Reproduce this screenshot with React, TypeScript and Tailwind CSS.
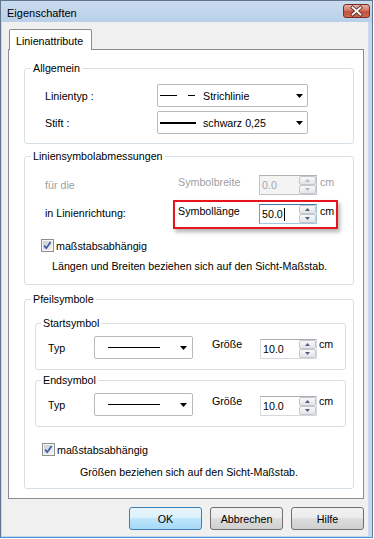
import React from "react";

const btnBase =
  "w-[73px] h-[23px] rounded-[3px] border flex items-center justify-center text-black";

const DropArrow = () => (
  <svg width="7" height="4" viewBox="0 0 7 4">
    <path d="M0 0h7L3.5 4z" fill="#000" />
  </svg>
);

const SpinHalf = ({ up, disabled }: { up?: boolean; disabled?: boolean }) => (
  <div className="flex-1 flex items-center justify-center border border-[#c3c8ce] rounded-[2px] bg-[linear-gradient(to_bottom,#f8f8f8,#e3e5e8)]">
    <svg width="5" height="3" viewBox="0 0 5 3">
      <path
        d={up ? "M0 3h5L2.5 0z" : "M0 0h5L2.5 3z"}
        fill={disabled ? "#b6b9bd" : "#4d5f85"}
      />
    </svg>
  </div>
);

interface SpinEditProps {
  value: string;
  width: string;
  disabled?: boolean;
  focused?: boolean;
}

const SpinEdit = ({ value, width, disabled, focused }: SpinEditProps) => {
  const frame = disabled
    ? "border-[#c2c4c7] border-t-[#adb2b5] bg-[#f4f4f4] text-[#a0a6b0]"
    : focused
      ? "border-[#a4c9e3] border-t-[#3d7bad] border-l-[#6d9cc4] bg-white text-black"
      : "border-[#d5d9de] border-t-[#abadb3] bg-white text-black";
  return (
    <div className={`flex h-[20px] border ${width} ${frame}`}>
      <div className="flex-1 flex items-center pl-[2px]">
        {value}
        {focused && <span className="w-px h-[13px] bg-black ml-px" />}
      </div>
      <div className="flex flex-col w-[17px]">
        <SpinHalf up disabled={disabled} />
        <SpinHalf disabled={disabled} />
      </div>
    </div>
  );
};

const CheckBox = () => (
  <svg width="13" height="13" viewBox="0 0 13 13" className="shrink-0">
    <defs>
      <linearGradient id="cbfill" x1="0" y1="0" x2="1" y2="1">
        <stop offset="0" stopColor="#c9cfd8" />
        <stop offset="1" stopColor="#f2f3f5" />
      </linearGradient>
    </defs>
    <rect x="0.5" y="0.5" width="12" height="12" fill="#f6f6f6" stroke="#8e8f8f" />
    <rect x="2" y="2" width="9" height="9" fill="url(#cbfill)" />
    <path
      d="M3.2 6.6l2.1 2.6 4.3-6.2"
      stroke="#3f58a3"
      strokeWidth="1.7"
      fill="none"
    />
  </svg>
);

// group box: the legend sits on the border, padding goes on the inner div
const Group = ({
  title,
  className,
  inner,
  legendClass = "ml-[6px]",
  children,
}: {
  title: string;
  className: string;
  inner: string;
  legendClass?: string;
  children: React.ReactNode;
}) => (
  <fieldset className={`border border-[#d5dfe5] rounded-[3px] ${className}`}>
    <legend className={`px-[2px] leading-[14px] ${legendClass}`}>{title}</legend>
    <div className={inner}>{children}</div>
  </fieldset>
);

const ArrowRow = () => (
  <div className="flex items-start h-[23px]">
    <div className="w-[46px] self-center">Typ</div>
    <div className="w-[99px] h-[23px] border border-[#b9b9b9] rounded-[2px] bg-white flex items-center">
      <span className="ml-[13px] w-[52px] h-px bg-black" />
      <span className="ml-auto mr-[5px] flex">
        <DropArrow />
      </span>
    </div>
    <div className="ml-[19px] w-[48px] mt-px">Größe</div>
    <div className="mt-[3px]">
      <SpinEdit value="10.0" width="w-[57px]" />
    </div>
    <div className="ml-[2px] mt-px">cm</div>
  </div>
);

export default function App() {
  return (
    <div className="w-[374px] h-[539px] bg-white font-['Liberation_Sans',Arial,sans-serif] text-[10.7px] leading-[14px] text-black">
      <div className="w-[373px] h-[538px] border border-[#62778f] border-b-[#4a90d9] flex flex-col bg-[#c4d8ee]">
        {/* title bar */}
        <div className="h-[21px] flex items-start bg-[linear-gradient(to_bottom,#cadcef,#b9d0e9)]">
          <div className="ml-[6px] mt-[5px] text-[11px]">Eigenschaften</div>
          <svg width="27" height="14" viewBox="0 0 27 14" className="ml-auto mr-[2px] mt-[3px]">
            <defs>
              <linearGradient id="closebg" x1="0" y1="0" x2="0" y2="1">
                <stop offset="0" stopColor="#e9b2a6" />
                <stop offset="0.45" stopColor="#d47a68" />
                <stop offset="0.5" stopColor="#c2513d" />
                <stop offset="1" stopColor="#cd6a4f" />
              </linearGradient>
            </defs>
            <rect x="0.5" y="0.5" width="26" height="13" rx="2.5" fill="url(#closebg)" stroke="#7b2e25" />
            <path d="M9.5 3.5l8 7M17.5 3.5l-8 7" stroke="#5a2a24" strokeWidth="3.4" strokeLinecap="square" />
            <path d="M9.5 3.5l8 7M17.5 3.5l-8 7" stroke="#ffffff" strokeWidth="1.8" strokeLinecap="square" />
          </svg>
        </div>

        {/* client */}
        <div className="flex-1 flex ml-px mr-[4px] mb-px">
          <div className="flex-1 bg-[#f0f0f0] flex flex-col">
            <div className="pt-[7px] pl-[7px] flex">
              <div className="relative z-10 -mb-px h-[21px] w-[83px] bg-white border border-b-0 border-[#898c95] rounded-t-[2px] pl-[6px] pt-[4px]">
                Linienattribute
              </div>
            </div>

            <div className="ml-[6px] w-[356px] h-[450px] border border-[#898c95] bg-white pt-[11px] pl-[15px] pr-[9px]">
              {/* Allgemein */}
              <Group title="Allgemein" className="" inner="pt-[9px] pb-[9px] pl-[20px]">
                <div className="flex flex-col gap-[4px]">
                  <div className="flex items-center h-[23px]">
                    <div className="w-[112px]">Linientyp :</div>
                    <div className="w-[151px] h-[23px] border border-[#b9b9b9] rounded-[2px] bg-white flex items-center">
                      <span className="ml-[2px] w-[17px] h-px bg-black" />
                      <span className="ml-[11px] w-[7px] h-px bg-black" />
                      <span className="ml-[8px]">Strichlinie</span>
                      <span className="ml-auto mr-[4px] flex">
                        <DropArrow />
                      </span>
                    </div>
                  </div>
                  <div className="flex items-center h-[23px]">
                    <div className="w-[112px]">Stift :</div>
                    <div className="w-[151px] h-[23px] border border-[#b9b9b9] rounded-[2px] bg-white flex items-center">
                      <span className="ml-[2px] w-[36px] h-[2px] bg-black" />
                      <span className="ml-[7px]">schwarz 0,25</span>
                      <span className="ml-auto mr-[4px] flex">
                        <DropArrow />
                      </span>
                    </div>
                  </div>
                </div>
              </Group>

              {/* Liniensymbolabmessungen */}
              <Group title="Liniensymbolabmessungen" className="mt-[5px]" inner="pt-[12px] pb-[11px]">
                <div className="flex items-start h-[20px] pl-[20px]">
                  <div className="w-[128px] mt-[3px] text-[#a0a0a0]">für die</div>
                  <div className="pl-[5px] w-[81px] text-[#a0a0a0] box-content">Symbolbreite</div>
                  <SpinEdit value="0.0" width="w-[58px]" disabled />
                  <div className="ml-[3px] text-[#a0a0a0]">cm</div>
                </div>
                <div className="flex items-start mt-[5px] pl-[20px]">
                  <div className="w-[128px] mt-[6px]">in Linienrichtung:</div>
                  <div className="w-[165px] h-[29px] border-2 border-[#e8141c] shadow-[2px_3px_4px_rgba(0,0,0,0.3)] flex items-start pl-[3px] pt-[2px]">
                    <div className="w-[81px]">Symbollänge</div>
                    <SpinEdit value="50.0" width="w-[58px]" focused />
                    <div className="ml-[3px]">cm</div>
                  </div>
                </div>
                <div className="flex items-center h-[13px] mt-[10px] pl-[16px]">
                  <CheckBox />
                  <span className="ml-[2px]">maßstabsabhängig</span>
                </div>
                <div className="mt-[7px] pl-[27px]">
                  Längen und Breiten beziehen sich auf den Sicht-Maßstab.
                </div>
              </Group>

              {/* Pfeilsymbole */}
              <Group title="Pfeilsymbole" className="mt-[7px]" inner="pb-[9px]">
                <Group
                  title="Startsymbol"
                  legendClass="ml-[5px]"
                  className="mt-[10px] ml-[10px] mr-[7px]"
                  inner="pt-[6px] pb-[10px] pl-[12px]"
                >
                  <ArrowRow />
                </Group>
                <Group
                  title="Endsymbol"
                  legendClass="ml-[5px]"
                  className="mt-[3px] ml-[10px] mr-[7px]"
                  inner="pt-[6px] pb-[10px] pl-[12px]"
                >
                  <ArrowRow />
                </Group>
                <div className="flex items-center h-[13px] mt-[16px] pl-[17px]">
                  <CheckBox />
                  <span className="ml-[2px]">maßstabsabhängig</span>
                </div>
                <div className="mt-[9px] pl-[55px]">
                  Größen beziehen sich auf den Sicht-Maßstab.
                </div>
              </Group>
            </div>

            {/* buttons */}
            <div className="mt-[8px] flex justify-end gap-[8px] pr-[4px]">
              <button className={`${btnBase} border-[#3c7fb1] bg-[linear-gradient(to_bottom,#eaf6fd_0%,#d9f0fc_50%,#bee6fd_50%,#a7d9f5_100%)]`}>
                OK
              </button>
              <button className={`${btnBase} border-[#707070] bg-[linear-gradient(to_bottom,#f2f2f2_0%,#ebebeb_50%,#dddddd_50%,#cfcfcf_100%)]`}>
                Abbrechen
              </button>
              <button className={`${btnBase} border-[#707070] bg-[linear-gradient(to_bottom,#f2f2f2_0%,#ebebeb_50%,#dddddd_50%,#cfcfcf_100%)]`}>
                Hilfe
              </button>
            </div>
          </div>
        </div>
      </div>
    </div>
  );
}
